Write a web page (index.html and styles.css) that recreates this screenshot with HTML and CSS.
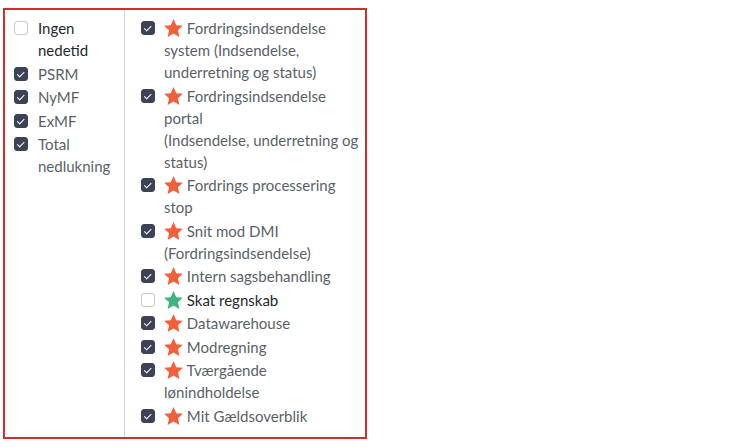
FILE: index.html
```html
<!DOCTYPE html>
<html lang="da">
<head>
<meta charset="utf-8">
<title>Nedetid</title>
<link rel="stylesheet" href="styles.css">
</head>
<body>
<div class="panel">
  <div class="col col-left">
    <div class="item"><span class="cb"></span><span class="label dark">Ingen<br>nedetid</span></div>
    <div class="item"><span class="cb on"></span><span class="label">PSRM</span></div>
    <div class="item"><span class="cb on"></span><span class="label">NyMF</span></div>
    <div class="item"><span class="cb on"></span><span class="label">ExMF</span></div>
    <div class="item"><span class="cb on"></span><span class="label">Total<br>nedlukning</span></div>
  </div>
  <div class="col col-right">
    <div class="item"><span class="cb on"></span><span class="label"><svg class="star red" viewBox="1.5 1.5 21 20.2"><path d="M12 1.5l3.1 6.9 7.4.8-5.5 5 1.6 7.4L12 17.8l-6.6 3.8L7 14.2l-5.5-5 7.4-.8z"/></svg> Fordringsindsendelse<br>system (Indsendelse,<br>underretning og status)</span></div>
    <div class="item"><span class="cb on"></span><span class="label"><svg class="star red" viewBox="1.5 1.5 21 20.2"><path d="M12 1.5l3.1 6.9 7.4.8-5.5 5 1.6 7.4L12 17.8l-6.6 3.8L7 14.2l-5.5-5 7.4-.8z"/></svg> Fordringsindsendelse<br>portal<br>(Indsendelse, underretning og<br>status)</span></div>
    <div class="item"><span class="cb on"></span><span class="label"><svg class="star red" viewBox="1.5 1.5 21 20.2"><path d="M12 1.5l3.1 6.9 7.4.8-5.5 5 1.6 7.4L12 17.8l-6.6 3.8L7 14.2l-5.5-5 7.4-.8z"/></svg> Fordrings processering<br>stop</span></div>
    <div class="item"><span class="cb on"></span><span class="label"><svg class="star red" viewBox="1.5 1.5 21 20.2"><path d="M12 1.5l3.1 6.9 7.4.8-5.5 5 1.6 7.4L12 17.8l-6.6 3.8L7 14.2l-5.5-5 7.4-.8z"/></svg> Snit mod DMI<br>(Fordringsindsendelse)</span></div>
    <div class="item"><span class="cb on"></span><span class="label"><svg class="star red" viewBox="1.5 1.5 21 20.2"><path d="M12 1.5l3.1 6.9 7.4.8-5.5 5 1.6 7.4L12 17.8l-6.6 3.8L7 14.2l-5.5-5 7.4-.8z"/></svg> Intern sagsbehandling</span></div>
    <div class="item"><span class="cb"></span><span class="label dark"><svg class="star green" viewBox="1.5 1.5 21 20.2"><path d="M12 1.5l3.1 6.9 7.4.8-5.5 5 1.6 7.4L12 17.8l-6.6 3.8L7 14.2l-5.5-5 7.4-.8z"/></svg> Skat regnskab</span></div>
    <div class="item"><span class="cb on"></span><span class="label"><svg class="star red" viewBox="1.5 1.5 21 20.2"><path d="M12 1.5l3.1 6.9 7.4.8-5.5 5 1.6 7.4L12 17.8l-6.6 3.8L7 14.2l-5.5-5 7.4-.8z"/></svg> Datawarehouse</span></div>
    <div class="item"><span class="cb on"></span><span class="label"><svg class="star red" viewBox="1.5 1.5 21 20.2"><path d="M12 1.5l3.1 6.9 7.4.8-5.5 5 1.6 7.4L12 17.8l-6.6 3.8L7 14.2l-5.5-5 7.4-.8z"/></svg> Modregning</span></div>
    <div class="item"><span class="cb on"></span><span class="label"><svg class="star red" viewBox="1.5 1.5 21 20.2"><path d="M12 1.5l3.1 6.9 7.4.8-5.5 5 1.6 7.4L12 17.8l-6.6 3.8L7 14.2l-5.5-5 7.4-.8z"/></svg> Tværgående<br>lønindholdelse</span></div>
    <div class="item"><span class="cb on"></span><span class="label"><svg class="star red" viewBox="1.5 1.5 21 20.2"><path d="M12 1.5l3.1 6.9 7.4.8-5.5 5 1.6 7.4L12 17.8l-6.6 3.8L7 14.2l-5.5-5 7.4-.8z"/></svg> Mit Gældsoverblik</span></div>
  </div>
</div>
</body>
</html>
```
FILE: styles.css
```css
html, body {
  margin: 0;
  padding: 0;
  background: #ffffff;
}
body {
  font-family: Lato, "Open Sans", sans-serif;
  font-size: 15px;
  line-height: 22px;
  color: #5a5f67;
}
.panel {
  margin: 8px 0 0 3px;
  width: 360px;
  height: 427px;
  border: 2px solid #d42a30;
  display: flex;
}
.col {
  display: flex;
  flex-direction: column;
  gap: 1.5px;
  padding-top: 7px;
}
.col-left {
  width: 110px;
  padding-left: 9px;
  border-right: 1px solid #cfd2d6;
}
.col-right {
  flex: 1;
  padding-left: 16px;
}
.item {
  display: flex;
  align-items: flex-start;
}
.cb {
  flex: none;
  width: 14px;
  height: 14px;
  margin-top: 4px;
  margin-right: 10px;
  box-sizing: border-box;
  border: 1px solid #c6cad0;
  border-radius: 3px;
  background: #ffffff;
  position: relative;
}
.col-right .cb {
  margin-right: 9px;
}
.cb.on {
  background: #3c4357;
  border-color: #3c4357;
}
.cb.on::after {
  content: "";
  position: absolute;
  left: 4px;
  top: 2px;
  width: 2.5px;
  height: 5.5px;
  border: solid #ffffff;
  border-width: 0 1.8px 1.8px 0;
  transform: rotate(45deg);
}
.label.dark {
  color: #25282d;
}
.star {
  width: 19px;
  height: 18px;
  vertical-align: -3px;
}
.star.red {
  fill: #f2603b;
}
.star.green {
  fill: #3fb27e;
}
```
